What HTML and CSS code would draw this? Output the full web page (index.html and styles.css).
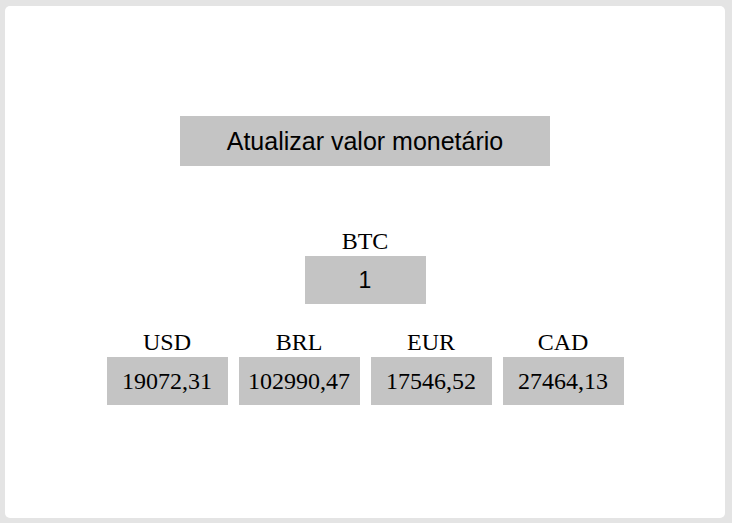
FILE: index.html
```html
<!DOCTYPE html>
<html lang="pt">
<head>
<meta charset="utf-8">
<title>Conversor</title>
<link rel="stylesheet" href="styles.css">
</head>
<body>
<main class="card">
  <button class="update">Atualizar valor monetário</button>
  <div class="currency btc">
    <div class="label">BTC</div>
    <div class="box input">1</div>
  </div>
  <div class="row">
    <div class="currency">
      <div class="label">USD</div>
      <div class="box">19072,31</div>
    </div>
    <div class="currency">
      <div class="label">BRL</div>
      <div class="box">102990,47</div>
    </div>
    <div class="currency">
      <div class="label">EUR</div>
      <div class="box">17546,52</div>
    </div>
    <div class="currency">
      <div class="label">CAD</div>
      <div class="box">27464,13</div>
    </div>
  </div>
</main>
</body>
</html>
```
FILE: styles.css
```css
html, body {
  margin: 0;
  padding: 0;
}
body {
  background: #e4e4e4;
  width: 732px;
  height: 523px;
  overflow: hidden;
  font-family: "Liberation Serif", "Times New Roman", serif;
}
.card {
  margin: 6px 7px 5px 5px;
  height: 512px;
  background: #ffffff;
  border-radius: 5px;
  display: flex;
  flex-direction: column;
  align-items: center;
  box-sizing: border-box;
  padding-top: 110px;
}
.update {
  width: 370px;
  height: 50px;
  border: none;
  background: #c4c4c4;
  font-family: "Liberation Sans", Arial, sans-serif;
  font-size: 25px;
  color: #000;
  padding: 0;
  margin: 0;
}
.currency {
  display: flex;
  flex-direction: column;
  align-items: center;
}
.btc {
  margin-top: 62px;
}
.label {
  font-size: 24px;
  line-height: 27px;
  margin-bottom: 1px;
  color: #000;
}
.box {
  width: 121px;
  height: 48px;
  background: #c4c4c4;
  display: flex;
  align-items: center;
  justify-content: center;
  font-size: 24px;
  color: #000;
}
.input {
  font-family: "Liberation Sans", Arial, sans-serif;
  font-size: 23px;
}
.row {
  display: flex;
  gap: 11px;
  margin-top: 25px;
}
```
